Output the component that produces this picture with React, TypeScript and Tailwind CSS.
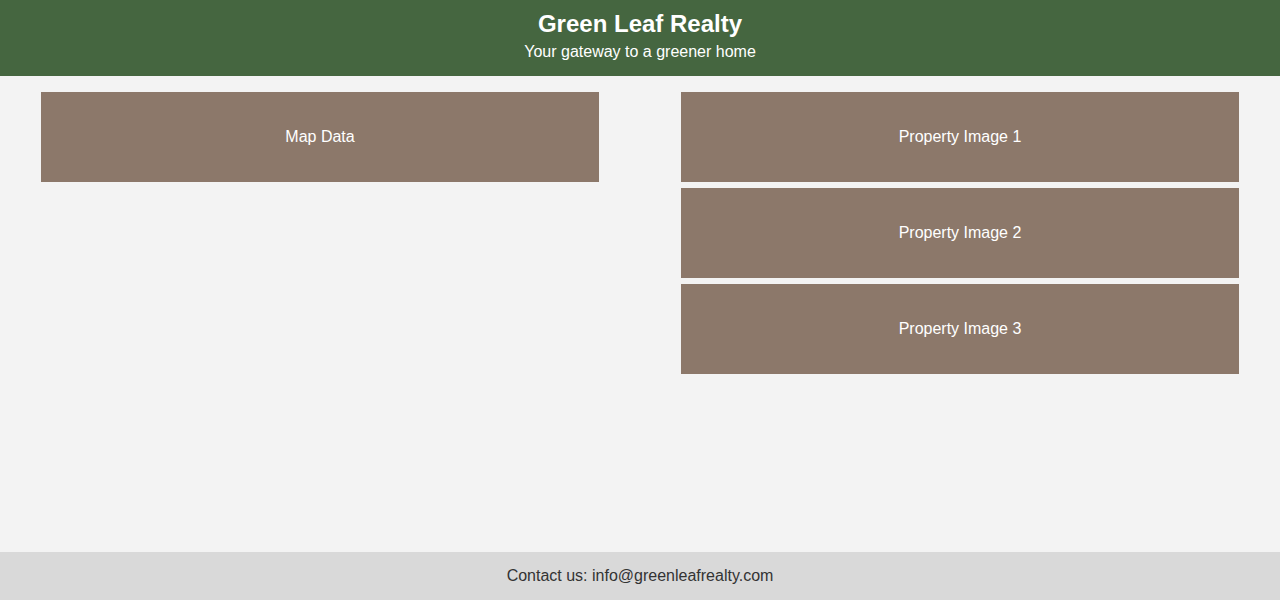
export default function App() {
  const images = ['Property Image 1', 'Property Image 2', 'Property Image 3'];

  return (
    <div className="min-h-screen flex flex-col bg-[#f3f3f3] font-['Liberation_Sans',Arial,sans-serif]">
      {/* Header */}
      <header className="h-[76px] bg-[#456640] text-white text-center pt-[9px]">
        <h1 className="text-2xl font-bold leading-[29px]">Green Leaf Realty</h1>
        <p className="text-base leading-6 mt-[2px]">Your gateway to a greener home</p>
      </header>

      {/* Main */}
      <main className="flex-1 grid grid-cols-2 pt-4">
        <div className="px-[41px]">
          <div className="h-[90px] bg-[#8c786a] text-white flex items-center justify-center">
            Map Data
          </div>
        </div>
        <div className="px-[41px] flex flex-col gap-[6px]">
          {images.map((img) => (
            <div key={img} className="h-[90px] bg-[#8c786a] text-white flex items-center justify-center">
              {img}
            </div>
          ))}
        </div>
      </main>

      {/* Footer */}
      <footer className="h-12 bg-[#d9d9d9] text-[#333333] flex items-center justify-center">
        Contact us: info@greenleafrealty.com
      </footer>
    </div>
  );
}
